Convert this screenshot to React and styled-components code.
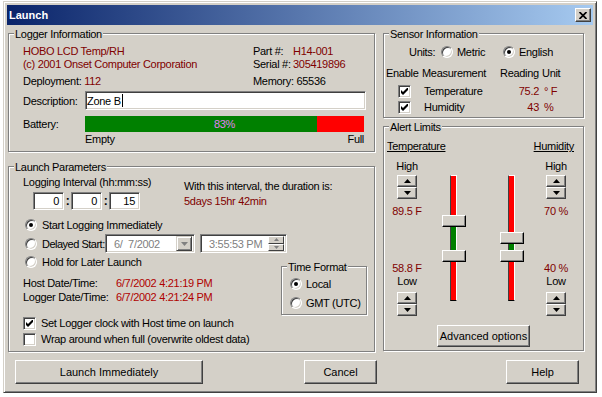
import React from "react";
import styled, { createGlobalStyle } from "styled-components";

const FACE = "#d4d0c8";
const SHADOW = "#808080";
const DARK = "#404040";
const RED = "#800000";

const GlobalStyle = createGlobalStyle`
  html, body { margin: 0; padding: 0; background: #fff; }
  body {
    font-family: "Liberation Sans", Arial, sans-serif;
    font-size: 11px;
    letter-spacing: -0.3px;
    color: #000;
  }
  * { box-sizing: border-box; }
`;

const Window = styled.div`
  margin: 1px 0 0 3px;
  width: 594px;
  height: 392px;
  display: flex;
  flex-direction: column;
  padding: 3px;
  background: ${FACE};
  border: 1px solid;
  border-color: ${FACE} ${DARK} ${DARK} ${FACE};
  box-shadow: inset 1px 1px 0 #fff, inset -1px -1px 0 ${SHADOW};
`;

const TitleBar = styled.div`
  height: 20px;
  flex: none;
  display: flex;
  align-items: center;
  padding: 0 2px;
  background: linear-gradient(to right, #0a246a, #a6caf0);
`;

const TitleText = styled.span`
  color: #fff;
  font-weight: bold;
  letter-spacing: 0;
`;

const CloseBtn = styled.div`
  margin-left: auto;
  width: 16px;
  height: 14px;
  display: flex;
  align-items: center;
  justify-content: center;
  background: ${FACE};
  border: 1px solid;
  border-color: #fff ${DARK} ${DARK} #fff;
  box-shadow: inset -1px -1px 0 ${SHADOW};
`;

const Body = styled.div`
  flex: 1;
  display: flex;
  flex-direction: column;
  padding: 8px 9px 0 1px;
`;

const MainRow = styled.div`
  display: flex;
  gap: 8px;
`;

const Column = styled.div`
  width: ${(p) => p.$w}px;
  display: flex;
  flex-direction: column;
`;

const Group = styled.div`
  flex: none;
  width: ${(p) => (p.$w ? `${p.$w}px` : "auto")};
  height: ${(p) => p.$h}px;
  margin-top: ${(p) => p.$mt || 0}px;
  display: flex;
  flex-direction: column;
  border: 1px solid ${SHADOW};
  box-shadow: inset 1px 1px 0 #fff, 1px 1px 0 #fff;
`;

const Caption = styled.div`
  align-self: flex-start;
  height: 13px;
  line-height: 13px;
  margin: -6px 0 0 5px;
  padding: 0 1px;
  background: ${FACE};
`;

const Content = styled.div`
  display: flex;
  flex-direction: column;
  padding-left: ${(p) => p.$pl || 0}px;
`;

const Red = styled.span`
  color: ${(p) => p.$c || RED};
`;

const Cell = styled.span`
  flex: none;
  display: inline-block;
  width: ${(p) => p.$w}px;
  white-space: nowrap;
  letter-spacing: ${(p) => (p.$tight ? "-0.5px" : "inherit")};
`;

const InfoGrid = styled.div`
  display: grid;
  grid-template-columns: 230px 40px auto;
  line-height: 13px;
  margin-top: 4px;
`;

const MetaRow = styled.div`
  display: flex;
  line-height: 13px;
  margin-top: 4px;
`;

const FieldRow = styled.div`
  display: flex;
  align-items: center;
  margin-top: ${(p) => p.$mt || 0}px;
`;

const Sunken = styled.div`
  flex: none;
  width: ${(p) => p.$w}px;
  height: ${(p) => p.$h || 19}px;
  display: flex;
  align-items: center;
  justify-content: ${(p) => (p.$right ? "flex-end" : "flex-start")};
  padding: ${(p) => p.$pad || "0 4px"};
  background: #fff;
  color: ${(p) => (p.$dim ? SHADOW : "#000")};
  white-space: pre;
  border: 1px solid;
  border-color: ${SHADOW} #fff #fff ${SHADOW};
  box-shadow: inset 1px 1px 0 ${DARK}, inset -1px -1px 0 ${FACE};
`;

const Caret = styled.span`
  display: inline-block;
  width: 1px;
  height: 13px;
  margin-left: 1px;
  background: #000;
`;

const Bar = styled.div`
  width: 279px;
  height: 16px;
  display: grid;
`;

const BarFill = styled.div`
  grid-area: 1 / 1;
  display: flex;
`;

const BarPart = styled.div`
  width: ${(p) => p.$w || "auto"};
  flex: ${(p) => (p.$w ? "none" : 1)};
  background: ${(p) => p.$c};
`;

const BarText = styled.div`
  grid-area: 1 / 1;
  align-self: center;
  justify-self: center;
  color: #e080f0;
  line-height: 13px;
`;

const ScaleRow = styled.div`
  width: 279px;
  margin: 1px 0 0 62px;
  display: flex;
  justify-content: space-between;
  line-height: 13px;
`;

const UnitsRow = styled.div`
  display: flex;
  align-items: center;
  height: 13px;
  margin-top: 4px;
  padding-left: 25px;
`;

const Option = styled.label`
  flex: none;
  display: flex;
  align-items: center;
  gap: ${(p) => p.$gap || 4}px;
  width: ${(p) => (p.$w ? `${p.$w}px` : "auto")};
  height: ${(p) => (p.$h ? `${p.$h}px` : "auto")};
  margin-top: ${(p) => p.$mt || 0}px;
  padding-left: ${(p) => p.$pl || 0}px;
  white-space: nowrap;
`;

const RadioCircle = styled.span`
  flex: none;
  width: 12px;
  height: 12px;
  border-radius: 50%;
  display: flex;
  align-items: center;
  justify-content: center;
  background: #fff;
  border: 1px solid;
  border-color: ${SHADOW} #fff #fff ${SHADOW};
  box-shadow: inset 1px 1px 0 ${DARK}, inset -1px -1px 0 ${FACE};

  &::after {
    content: "";
    width: 4px;
    height: 4px;
    border-radius: 50%;
    background: ${(p) => (p.$on ? "#000" : "transparent")};
  }
`;

const CheckBox = styled.span`
  flex: none;
  width: 13px;
  height: 13px;
  margin-left: ${(p) => p.$ml || 0}px;
  display: flex;
  align-items: center;
  justify-content: center;
  background: #fff;
  border: 1px solid;
  border-color: ${SHADOW} #fff #fff ${SHADOW};
  box-shadow: inset 1px 1px 0 ${DARK}, inset -1px -1px 0 ${FACE};
`;

const SensorGrid = styled.div`
  display: grid;
  grid-template-columns: 36px 78px 42px auto;
  grid-auto-rows: 16px;
  margin-top: 9px;
  padding-left: 2px;
`;

const HeadCell = styled.span`
  line-height: 13px;
`;

const GridCell = styled.span`
  display: flex;
  align-items: center;
  justify-content: ${(p) => (p.$right ? "flex-end" : "flex-start")};
  padding: ${(p) => p.$pad || "0"};
  color: ${(p) => (p.$red ? RED : "#000")};
  white-space: pre;
`;

const HeadRow = styled.div`
  display: flex;
  justify-content: space-between;
  line-height: 13px;
  margin-top: 6px;
  padding: 0 9px 0 3px;
`;

const Underlined = styled.span`
  text-decoration: underline;
`;

const LimitsRow = styled.div`
  display: flex;
  align-items: flex-start;
  height: 156px;
  margin-top: 7px;
  padding-left: 3px;
`;

const LimitCol = styled.div`
  flex: none;
  width: 40px;
  height: 100%;
  margin-left: ${(p) => p.$ml || 0}px;
  display: flex;
  flex-direction: column;
  justify-content: space-between;
`;

const LimitStack = styled.div`
  display: flex;
  flex-direction: column;
  align-items: center;
  line-height: 13px;
`;

const Spin = styled.div`
  width: 20px;
  display: flex;
  flex-direction: column;
  margin-top: ${(p) => p.$mt || 0}px;
  margin-bottom: ${(p) => p.$mb || 0}px;
`;

const SpinHalf = styled.div`
  height: 12px;
  display: flex;
  align-items: center;
  justify-content: center;
  background: ${FACE};
  border: 1px solid;
  border-color: #fff ${DARK} ${DARK} #fff;
  box-shadow: inset -1px -1px 0 ${SHADOW};
`;

const Track = styled.div`
  flex: none;
  width: 7px;
  height: 126px;
  margin: 15px 0 0 ${(p) => p.$ml}px;
  display: flex;
  flex-direction: column;
  align-items: center;
  border: 1px solid;
  border-color: #fff #fff #000 ${DARK};
`;

const Segment = styled.div`
  flex: none;
  width: 5px;
  height: ${(p) => p.$h}px;
  background: ${(p) => (p.$green ? "#008000" : "#ff0000")};
`;

const Thumb = styled.div`
  flex: none;
  width: 24px;
  height: 12px;
  background: ${FACE};
  border: 1px solid;
  border-color: #fff #000 #000 #fff;
  box-shadow: inset -1px -1px 0 ${SHADOW};
`;

const PushButton = styled.button`
  flex: none;
  width: ${(p) => p.$w}px;
  height: ${(p) => p.$h || 24}px;
  margin: ${(p) => p.$m || "0"};
  padding: 0;
  font: inherit;
  color: #000;
  background: ${FACE};
  border: 1px solid;
  border-color: #fff ${DARK} ${DARK} #fff;
  box-shadow: inset -1px -1px 0 ${SHADOW}, inset 1px 1px 0 ${FACE};
  align-self: ${(p) => (p.$center ? "center" : "auto")};
`;

const Line = styled.div`
  line-height: 13px;
  margin-top: ${(p) => p.$mt || 0}px;
  color: ${(p) => (p.$red ? RED : "#000")};
`;

const IntervalRow = styled.div`
  display: flex;
  margin-top: 2px;
`;

const IntervalLeft = styled.div`
  width: 161px;
  flex: none;
`;

const EditsRow = styled.div`
  display: flex;
  align-items: center;
  margin: 3px 0 0 10px;
`;

const Colon = styled.span`
  width: 7px;
  text-align: center;
  font-weight: bold;
  font-size: 12px;
`;

const Combo = styled(Sunken)`
  padding: 0 2px 0 8px;
  justify-content: space-between;
`;

const DropBtn = styled.div`
  width: 16px;
  height: 15px;
  display: flex;
  align-items: center;
  justify-content: center;
  background: ${FACE};
  border: 1px solid;
  border-color: ${FACE} ${DARK} ${DARK} ${FACE};
  box-shadow: inset 1px 1px 0 #fff, inset -1px -1px 0 ${SHADOW};
`;

const MiniSpin = styled.div`
  width: 16px;
  height: 15px;
  display: flex;
  flex-direction: column;
`;

const MiniHalf = styled.div`
  flex: 1;
  display: flex;
  align-items: center;
  justify-content: center;
  background: ${FACE};
  border: 1px solid;
  border-color: #fff ${DARK} ${DARK} #fff;
`;

const DatesRow = styled.div`
  display: flex;
`;

const DatesCol = styled.div`
  width: 258px;
  flex: none;
  margin-top: 6px;
`;

const DateLine = styled.div`
  display: flex;
  line-height: 13px;
  margin-top: ${(p) => p.$mt || 0}px;
`;

const ButtonRow = styled.div`
  display: flex;
  margin-top: 8px;
  padding-left: 7px;
`;

const Arrow = ({ dir = "up", w = 7, h = 4, color = "#000" }) => (
  <svg width={w} height={h} viewBox={`0 0 ${w} ${h}`}>
    <polygon
      points={dir === "up" ? `0,${h} ${w},${h} ${w / 2},0` : `0,0 ${w},0 ${w / 2},${h}`}
      fill={color}
    />
  </svg>
);

const Check = () => (
  <svg width="7" height="7" viewBox="0 0 7 7">
    <polygon points="0,2 2,4 7,-1 7,2 2,7 0,5" fill="#000" />
  </svg>
);

const Radio = ({ on, children, ...rest }) => (
  <Option {...rest}>
    <RadioCircle $on={on} />
    {children}
  </Option>
);

const SpinBox = (props) => (
  <Spin {...props}>
    <SpinHalf>
      <Arrow dir="up" />
    </SpinHalf>
    <SpinHalf>
      <Arrow dir="down" />
    </SpinHalf>
  </Spin>
);

function Slider({ ml, parts }) {
  return (
    <Track $ml={ml}>
      <Segment $h={parts[0]} />
      <Thumb />
      <Segment $h={parts[1]} $green />
      <Thumb />
      <Segment $h={parts[2]} />
    </Track>
  );
}

export default function App() {
  return (
    <>
      <GlobalStyle />
      <Window>
        <TitleBar>
          <TitleText>Launch</TitleText>
          <CloseBtn>
            <svg width="8" height="7" viewBox="0 0 8 7">
              <path d="M0.5 0 L7.5 7 M7.5 0 L0.5 7" stroke="#000" strokeWidth="1.7" />
            </svg>
          </CloseBtn>
        </TitleBar>

        <Body>
          <MainRow>
            <Column $w={367}>
              <Group $h={119}>
                <Caption>Logger Information</Caption>
                <Content $pl={14}>
                  <InfoGrid>
                    <Red>HOBO LCD Temp/RH</Red>
                    <span>Part #:</span>
                    <Red>H14-001</Red>
                    <Red>(c) 2001 Onset Computer Corporation</Red>
                    <span>Serial #:</span>
                    <Red>305419896</Red>
                  </InfoGrid>
                  <MetaRow>
                    <Cell $w={230}>
                      Deployment: <Red>112</Red>
                    </Cell>
                    <span>Memory: 65536</span>
                  </MetaRow>
                  <FieldRow $mt={3}>
                    <Cell $w={62}>Description:</Cell>
                    <Sunken $w={281} $pad="0 2px 0 1px">
                      Zone B<Caret />
                    </Sunken>
                  </FieldRow>
                  <FieldRow $mt={6}>
                    <Cell $w={62}>Battery:</Cell>
                    <Bar>
                      <BarFill>
                        <BarPart $w="83%" $c="#008000" />
                        <BarPart $c="#ff0000" />
                      </BarFill>
                      <BarText>83%</BarText>
                    </Bar>
                  </FieldRow>
                  <ScaleRow>
                    <span>Empty</span>
                    <span>Full</span>
                  </ScaleRow>
                </Content>
              </Group>

              <Group $h={186} $mt={14}>
                <Caption>Launch Parameters</Caption>
                <Content $pl={14}>
                  <IntervalRow>
                    <IntervalLeft>
                      <Line>Logging Interval (hh:mm:ss)</Line>
                      <EditsRow>
                        <Sunken $w={31} $h={18} $right>0</Sunken>
                        <Colon>:</Colon>
                        <Sunken $w={31} $h={18} $right>0</Sunken>
                        <Colon>:</Colon>
                        <Sunken $w={31} $h={18} $right>15</Sunken>
                      </EditsRow>
                    </IntervalLeft>
                    <div>
                      <Line $mt={4}>With this interval, the duration is:</Line>
                      <Line $mt={2} $red>5days 15hr 42min</Line>
                    </div>
                  </IntervalRow>

                  <Radio on $h={18} $mt={6} $pl={2} $gap={5}>
                    Start Logging Immediately
                  </Radio>
                  <Option $h={19} $pl={2} $gap={5}>
                    <RadioCircle />
                    <Cell $w={58} $tight>Delayed Start:</Cell>
                    <Combo $w={90} $dim>
                      {"6/  7/2002"}
                      <DropBtn>
                        <Arrow dir="down" color={SHADOW} />
                      </DropBtn>
                    </Combo>
                    <Combo $w={87} $dim>
                      3:55:53 PM
                      <MiniSpin>
                        <MiniHalf>
                          <Arrow dir="up" w={5} h={3} color={SHADOW} />
                        </MiniHalf>
                        <MiniHalf>
                          <Arrow dir="down" w={5} h={3} color={SHADOW} />
                        </MiniHalf>
                      </MiniSpin>
                    </Combo>
                  </Option>
                  <Radio $h={18} $pl={2} $gap={5}>
                    Hold for Later Launch
                  </Radio>

                  <DatesRow>
                    <DatesCol>
                      <DateLine>
                        <Cell $w={93}>Host Date/Time:</Cell>
                        <Red $c="#b00000">6/7/2002 4:21:19 PM</Red>
                      </DateLine>
                      <DateLine $mt={1}>
                        <Cell $w={93}>Logger Date/Time:</Cell>
                        <Red $c="#b00000">6/7/2002 4:21:24 PM</Red>
                      </DateLine>
                    </DatesCol>
                    <Group $w={86} $h={49} $mt={-5}>
                      <Caption>Time Format</Caption>
                      <Radio on $h={19} $pl={8}>
                        Local
                      </Radio>
                      <Radio $h={19} $pl={8}>
                        GMT (UTC)
                      </Radio>
                    </Group>
                  </DatesRow>

                  <Option $h={16} $gap={5}>
                    <CheckBox>
                      <Check />
                    </CheckBox>
                    Set Logger clock with Host time on launch
                  </Option>
                  <Option $h={16} $gap={5}>
                    <CheckBox />
                    Wrap around when full (overwrite oldest data)
                  </Option>
                </Content>
              </Group>
            </Column>

            <Column $w={201}>
              <Group $h={85}>
                <Caption>Sensor Information</Caption>
                <UnitsRow>
                  <Cell $w={32}>Units:</Cell>
                  <Radio $w={62}>Metric</Radio>
                  <Radio on>English</Radio>
                </UnitsRow>
                <SensorGrid>
                  <HeadCell>Enable</HeadCell>
                  <HeadCell>Measurement</HeadCell>
                  <HeadCell>Reading</HeadCell>
                  <HeadCell>Unit</HeadCell>

                  <GridCell>
                    <CheckBox $ml={12}>
                      <Check />
                    </CheckBox>
                  </GridCell>
                  <GridCell $pad="0 0 0 2px">Temperature</GridCell>
                  <GridCell $right $red $pad="0 3px 0 0">75.2</GridCell>
                  <GridCell $red $pad="0 0 0 2px">° F</GridCell>

                  <GridCell>
                    <CheckBox $ml={12}>
                      <Check />
                    </CheckBox>
                  </GridCell>
                  <GridCell $pad="0 0 0 2px">Humidity</GridCell>
                  <GridCell $right $red $pad="0 3px 0 0">43</GridCell>
                  <GridCell $red $pad="0 0 0 2px">%</GridCell>
                </SensorGrid>
              </Group>

              <Group $h={225} $mt={8}>
                <Caption>Alert Limits</Caption>
                <HeadRow>
                  <Underlined>Temperature</Underlined>
                  <Underlined>Humidity</Underlined>
                </HeadRow>
                <LimitsRow>
                  <LimitCol>
                    <LimitStack>
                      <span>High</span>
                      <SpinBox $mt={2} $mb={6} />
                      <Red>89.5 F</Red>
                    </LimitStack>
                    <LimitStack>
                      <Red>58.8 F</Red>
                      <span>Low</span>
                      <SpinBox $mt={4} />
                    </LimitStack>
                  </LimitCol>
                  <Slider ml={23} parts={[39, 23, 38]} />
                  <Slider ml={51} parts={[56, 6, 38]} />
                  <LimitCol $ml={21}>
                    <LimitStack>
                      <span>High</span>
                      <SpinBox $mt={2} $mb={6} />
                      <Red>70 %</Red>
                    </LimitStack>
                    <LimitStack>
                      <Red>40 %</Red>
                      <span>Low</span>
                      <SpinBox $mt={4} />
                    </LimitStack>
                  </LimitCol>
                </LimitsRow>
                <PushButton $w={93} $h={22} $m="9px 0 0 0" $center>
                  Advanced options
                </PushButton>
              </Group>
            </Column>
          </MainRow>

          <ButtonRow>
            <PushButton $w={188}>Launch Immediately</PushButton>
            <PushButton $w={73} $m="0 0 0 101px">
              Cancel
            </PushButton>
            <PushButton $w={73} $m="0 0 0 129px">
              Help
            </PushButton>
          </ButtonRow>
        </Body>
      </Window>
    </>
  );
}
